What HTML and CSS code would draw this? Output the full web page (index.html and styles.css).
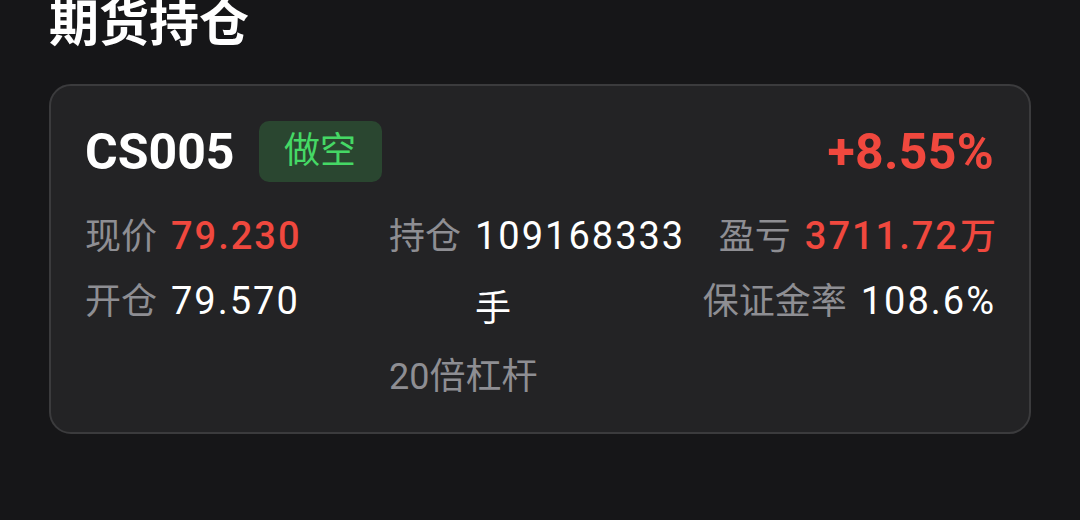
FILE: index.html
```html
<!DOCTYPE html>
<html lang="zh-CN">

<head>
    <meta charset="UTF-8">
    <meta name="viewport" content="width=device-width, initial-scale=1.0">
    <title>期货持仓</title>
    <link rel="stylesheet" href="styles.css">
</head>

<body>
    <h2 class="title">期货持仓</h2>

    <div class="card">
        <div class="card-head">
            <span class="code">CS005</span>
            <span class="tag">做空</span>
            <span class="rate up">+8.55%</span>
        </div>

        <div class="info">
            <div class="col">
                <div class="item">
                    <span class="label">现价</span>
                    <span class="val up">79.230</span>
                </div>
                <div class="item">
                    <span class="label">开仓</span>
                    <span class="val">79.570</span>
                </div>
            </div>
            <div class="col col-mid">
                <div class="item">
                    <span class="label">持仓</span>
                    <span class="val">109168333<br><em class="unit">手</em></span>
                </div>
                <div class="item">
                    <span class="label">20倍杠杆</span>
                </div>
            </div>
            <div class="col col-right">
                <div class="item">
                    <span class="label">盈亏</span>
                    <span class="val up">3711.72<em class="unit-inline">万</em></span>
                </div>
                <div class="item">
                    <span class="label">保证金率</span>
                    <span class="val">108.6%</span>
                </div>
            </div>
        </div>
    </div>
</body>

</html>
```

FILE: styles.css
```css
* {
    margin: 0;
    padding: 0;
    box-sizing: border-box;
}

body {
    background-color: #161618;
    color: #fff;
    font-family: Roboto, "Noto Sans CJK SC", sans-serif;
    padding: 0 49px;
}

.title {
    font-size: 50px;
    font-weight: 700;
    line-height: 48px;
    height: 84px;
}

.card {
    width: 982px;
    height: 350px;
    background-color: #232325;
    border: 2px solid #3b3b3d;
    border-radius: 22px;
    padding: 35px 35px 0 34px;
}

.card-head {
    display: flex;
    align-items: center;
    height: 61px;
}

.code {
    font-size: 50px;
    font-weight: 700;
}

.tag {
    margin-left: 24px;
    width: 123px;
    height: 61px;
    line-height: 61px;
    text-align: center;
    font-size: 36px;
    color: #45d865;
    background-color: #2a4630;
    border-radius: 10px;
}

.rate {
    margin-left: auto;
    font-size: 50px;
    font-weight: 700;
    letter-spacing: 0.3px;
}

.up {
    color: #f0483e;
}

.info {
    display: flex;
    margin-top: 32px;
}

.col {
    display: flex;
    flex-direction: column;
    gap: 20px;
}

.col:first-child {
    width: 304px;
}

.col-mid {
    gap: 24px;
}

.col-right {
    margin-left: auto;
    align-items: flex-end;
}

.item {
    display: flex;
    align-items: baseline;
    gap: 14px;
    font-size: 36px;
    line-height: 44px;
}

.label {
    color: #8e8e93;
}

.val {
    font-size: 38px;
    letter-spacing: 2px;
}

.col-right .val {
    margin-right: -2px;
}

.val.up {
    font-weight: 500;
}

.unit,
.unit-inline {
    font-style: normal;
    font-size: 36px;
    letter-spacing: 0;
}

.unit {
    display: inline-block;
    margin-top: 29px;
}

.unit-inline {
    margin-left: 1px;
}
```
